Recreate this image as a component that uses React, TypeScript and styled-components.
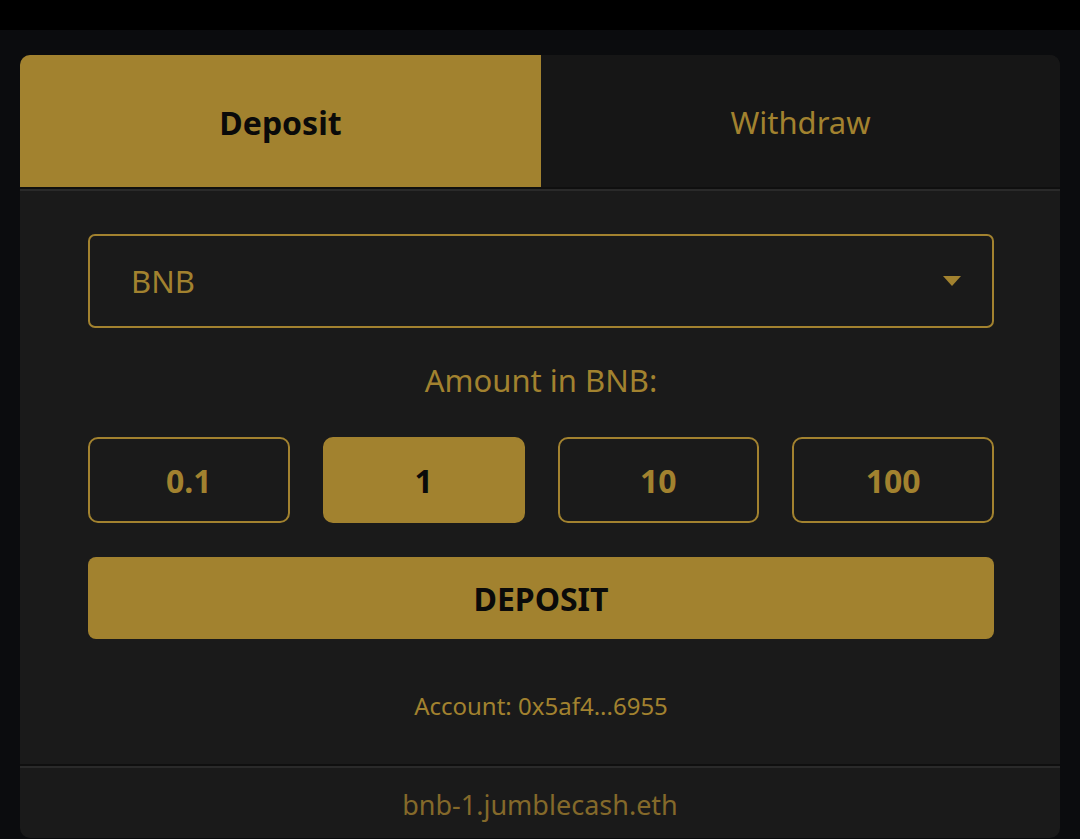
import styled, { createGlobalStyle } from "styled-components";

const GOLD = "#a2822f";

const GlobalStyle = createGlobalStyle`
  html, body {
    margin: 0;
    padding: 0;
    background: #0b0c0e;
    font-family: "Noto Sans", "Open Sans", sans-serif;
  }
  * { box-sizing: border-box; }
`;

const amounts = ["0.1", "1", "10", "100"];

const App = () => {
  return (
    <Page>
      <GlobalStyle />
      <TopBar />
      <Stage>
        <Card>
          <Tabs>
            <Tab active>Deposit</Tab>
            <Tab>Withdraw</Tab>
          </Tabs>
          <Divider />
          <Body>
            <Select>
              <span>BNB</span>
              <svg width="20" height="12" viewBox="0 0 20 12">
                <path d="M1 1h18l-9 10z" fill={GOLD} />
              </svg>
            </Select>
            <Label>Amount in BNB:</Label>
            <Amounts>
              {amounts.map((a) => (
                <AmountButton key={a} active={a === "1"}>
                  {a}
                </AmountButton>
              ))}
            </Amounts>
            <DepositButton>DEPOSIT</DepositButton>
            <Account>Account: 0x5af4...6955</Account>
          </Body>
          <Divider />
          <Footer>bnb-1.jumblecash.eth</Footer>
        </Card>
      </Stage>
    </Page>
  );
};

export default App;

const Page = styled.div`
  width: 1080px;
  height: 839px;
  overflow: hidden;
  background: #0b0c0e;
`;
const TopBar = styled.div`
  height: 30px;
  background: #000;
`;
const Stage = styled.div`
  padding: 25px 20px 0 20px;
`;
const Card = styled.div`
  width: 1040px;
  height: 783px;
  background: #1a1a1a;
  border-radius: 10px;
  overflow: hidden;
  display: flex;
  flex-direction: column;
`;
const Tabs = styled.div`
  display: grid;
  grid-template-columns: 521px 1fr;
  height: 132px;
  background: #161616;
`;
const Tab = styled.div<{ active?: boolean }>`
  display: flex;
  align-items: center;
  justify-content: center;
  font-size: ${(p) => (p.active ? 32 : 31)}px;
  font-weight: ${(p) => (p.active ? 700 : 400)};
  color: ${(p) => (p.active ? "#0a0a0a" : GOLD)};
  background: ${(p) => (p.active ? GOLD : "transparent")};
  padding-top: 2px;
`;
const Divider = styled.div`
  height: 4px;
  border-top: 2px solid #0f0f0f;
  border-bottom: 2px solid #2a2a2a;
`;
const Body = styled.div`
  padding: 43px 66px 0 68px;
  display: flex;
  flex-direction: column;
  height: 573px;
`;
const Select = styled.div`
  height: 94px;
  border: 2px solid ${GOLD};
  border-radius: 7px;
  display: flex;
  align-items: center;
  justify-content: space-between;
  padding: 0 30px 0 41px;
  color: ${GOLD};
  font-size: 31px;
`;
const Label = styled.div`
  margin-top: 33px;
  text-align: center;
  color: ${GOLD};
  font-size: 31px;
  line-height: 38px;
`;
const Amounts = styled.div`
  margin-top: 38px;
  display: grid;
  grid-template-columns: repeat(4, 1fr);
  gap: 33px;
`;
const AmountButton = styled.div<{ active?: boolean }>`
  height: 86px;
  border-radius: 10px;
  border: 2px solid ${GOLD};
  background: ${(p) => (p.active ? GOLD : "transparent")};
  color: ${(p) => (p.active ? "#0a0a0a" : GOLD)};
  display: flex;
  align-items: center;
  justify-content: center;
  font-size: 32px;
  font-weight: 700;
`;
const DepositButton = styled.div`
  margin-top: 34px;
  height: 82px;
  border-radius: 8px;
  background: ${GOLD};
  color: #0a0a0a;
  display: flex;
  align-items: center;
  justify-content: center;
  font-size: 32px;
  font-weight: 700;
`;
const Account = styled.div`
  margin-top: 51px;
  text-align: center;
  color: ${GOLD};
  font-size: 24px;
  line-height: 32px;
`;
const Footer = styled.div`
  flex: 1;
  display: flex;
  justify-content: center;
  padding-top: 18px;
  color: #84692a;
  font-size: 27px;
`;
